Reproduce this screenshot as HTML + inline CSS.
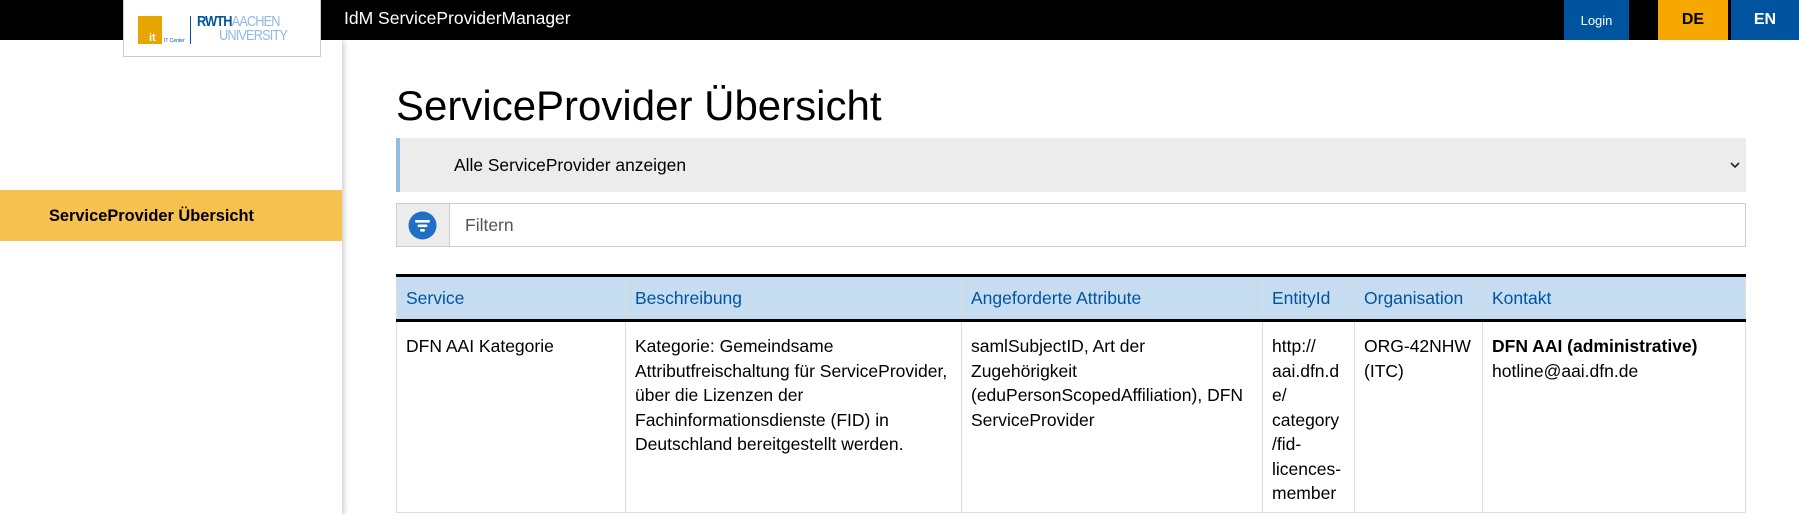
<!DOCTYPE html>
<html><head><meta charset="utf-8"><style>
*{box-sizing:border-box;margin:0;padding:0}
body{width:1799px;height:515px;overflow:hidden;background:#fff;font-family:"Liberation Sans",Arial,sans-serif;position:relative}
.top{position:absolute;left:0;top:0;width:1799px;height:40px;background:#000}
.logo{position:absolute;left:123px;top:0;width:198px;height:57px;background:#fff;border:1px solid #ccc;border-top:none;z-index:3}
.apptitle{position:absolute;left:344px;top:8px;color:#fff;font-size:17.5px}
.btn{position:absolute;top:0;height:40px;display:flex;align-items:center;justify-content:center}
.side{position:absolute;left:0;top:40px;width:342px;height:475px;background:#fff;box-shadow:2px 0 5px rgba(0,0,0,.2);z-index:2}
.sel{position:absolute;left:0;top:150px;width:342px;height:51px;background:#f6c14f;font-weight:bold;font-size:16.4px;padding:17px 0 0 49px}
h1{position:absolute;left:396px;top:82px;font-weight:normal;font-size:42px;color:#000}
.dd{position:absolute;left:396px;top:138px;width:1350px;height:54px;background:#ececec;border-left:4px solid #92bde0;font-size:17.4px;padding:17px 0 0 54px}
.filt{position:absolute;left:396px;top:203px;width:1350px;height:44px;border:1px solid #ccc}
.ic{position:absolute;left:0;top:0;width:53px;height:42px;background:#ececec;border-right:1px solid #ccc}
table{position:absolute;left:396px;top:274px;width:1350px;border-collapse:collapse;font-size:17.5px}
th{background:#c6ddf1;color:#00549f;font-weight:normal;text-align:left;height:45px;padding:0 9px;border-top:3px solid #000;border-bottom:3px solid #000;border-left:1px solid #ddd;border-right:1px solid #ddd}
td{vertical-align:top;padding:12px 9px 0;height:192px;line-height:24.5px;border:1px solid #ddd}
</style></head><body>
<div class="top"></div>
<div class="logo">
 <div style="position:absolute;left:14px;top:16px;width:24px;height:28px;background:#e6a500"></div>
 <div style="position:absolute;left:25px;top:32px;color:#fff;font-size:11px;font-weight:bold">it</div>
 <div style="position:absolute;left:40px;top:38px;font-size:5px;color:#00549f">IT Center</div>
 <div style="position:absolute;left:66px;top:16px;width:1px;height:28px;background:#00549f"></div>
 <div style="position:absolute;left:73px;top:13px;font-size:15px;font-weight:bold;color:#00549f;letter-spacing:-1px;transform:scaleX(.85);transform-origin:left">RWTH<span style="font-weight:normal;color:#8ebae5">AACHEN</span></div>
 <div style="position:absolute;left:95px;top:27px;font-size:15px;color:#8ebae5;letter-spacing:-1px;transform:scaleX(.85);transform-origin:left">UNIVERSITY</div>
</div>
<div class="apptitle">IdM ServiceProviderManager</div>
<div class="btn" style="left:1564px;width:65px;background:#00549f;color:#fff;font-size:13px">Login</div>
<div class="btn" style="left:1658px;width:70px;background:#f6a800;color:#000;font-size:16px;font-weight:bold">DE</div>
<div class="btn" style="left:1731px;width:68px;background:#00549f;color:#fff;font-size:16px;font-weight:bold">EN</div>
<div class="side"><div class="sel">ServiceProvider Übersicht</div></div>
<h1>ServiceProvider Übersicht</h1>
<div class="dd">Alle ServiceProvider anzeigen
<svg style="position:absolute;right:6px;top:24px" width="10" height="7" viewBox="0 0 10 7"><path d="M1 1l4 4 4-4" stroke="#222" stroke-width="1.6" fill="none"/></svg></div>
<div class="filt"><div class="ic"><svg style="position:absolute;left:11px;top:7px" width="29" height="29" viewBox="0 0 29 29"><circle cx="14.5" cy="14.5" r="14" fill="#1f6fc5"/><rect x="7" y="9" width="15" height="2.6" rx="1.3" fill="#fff"/><rect x="9.5" y="13.5" width="10" height="2.6" rx="1.3" fill="#fff"/><rect x="12" y="18" width="5" height="2.6" rx="1.3" fill="#fff"/></svg></div>
<div style="position:absolute;left:68px;top:11px;font-size:17.5px;color:#555">Filtern</div></div>
<table><tr><th style="width:229px">Service</th><th style="width:336px">Beschreibung</th><th style="width:301px">Angeforderte Attribute</th><th style="width:92px">EntityId</th><th style="width:128px">Organisation</th><th>Kontakt</th></tr>
<tr><td>DFN AAI Kategorie</td><td>Kategorie: Gemeindsame Attributfreischaltung für ServiceProvider, über die Lizenzen der Fachinformationsdienste (FID) in Deutschland bereitgestellt werden.</td><td>samlSubjectID, Art der Zugehörigkeit (eduPersonScopedAffiliation), DFN ServiceProvider</td><td>http://<br>aai.dfn.d<br>e/<br>category<br>/fid-<br>licences-<br>member</td><td>ORG-42NHW (ITC)</td><td><b>DFN AAI (administrative)</b><br>hotline@aai.dfn.de</td></tr></table>
</body></html>
